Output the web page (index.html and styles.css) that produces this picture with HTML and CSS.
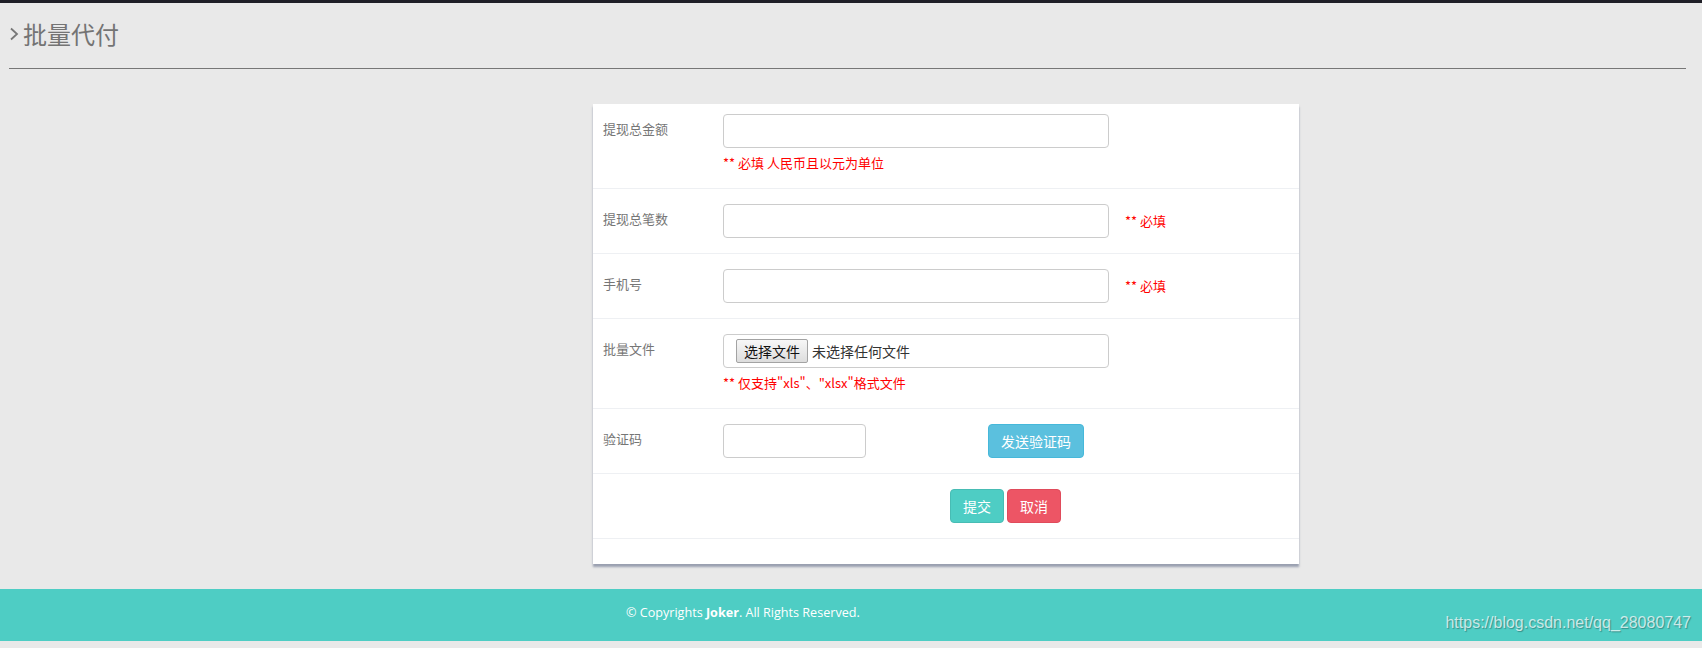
FILE: index.html
```html
<!DOCTYPE html>
<html lang="zh-CN">
  <head>
    <meta charset="UTF-8" />
    <title>批量代付</title>
    <link rel="stylesheet" href="styles.css">
  </head>
  <body>
    <div class="topbar"></div>

    <div class="page-head">
      <h3 class="page-title">
        <svg class="chevron" width="10" height="14" viewBox="0 0 10 14">
          <polyline points="2,1.5 8,7 2,12.5" fill="none" stroke="#777" stroke-width="1.8" />
        </svg>
        批量代付
      </h3>
    </div>

    <div class="panel">
      <form class="form">
        <div class="form-row first">
          <label class="form-label">提现总金额</label>
          <div class="form-field">
            <input class="form-control" type="text">
            <p class="help">** 必填 人民币且以元为单位</p>
          </div>
        </div>

        <div class="form-row">
          <label class="form-label">提现总笔数</label>
          <div class="form-field">
            <input class="form-control" type="text">
          </div>
          <span class="note">** 必填</span>
        </div>

        <div class="form-row">
          <label class="form-label">手机号</label>
          <div class="form-field">
            <input class="form-control" type="text">
          </div>
          <span class="note">** 必填</span>
        </div>

        <div class="form-row">
          <label class="form-label">批量文件</label>
          <div class="form-field">
            <div class="form-control file-box">
              <button type="button" class="file-btn">选择文件</button>
              <span class="file-name">未选择任何文件</span>
            </div>
            <p class="help">** 仅支持"xls"、"xlsx"格式文件</p>
          </div>
        </div>

        <div class="form-row">
          <label class="form-label">验证码</label>
          <div class="code-field">
            <input class="form-control" type="text">
          </div>
          <button type="button" class="btn btn-info send-code">发送验证码</button>
        </div>

        <div class="form-row actions">
          <button type="button" class="btn btn-theme">提交</button>
          <button type="button" class="btn btn-danger">取消</button>
        </div>
      </form>
    </div>

    <footer class="footer">
      <div class="copyright">© Copyrights <b>Joker</b>. All Rights Reserved.</div>
      <span class="watermark">https://blog.csdn.net/qq_28080747</span>
    </footer>
  </body>
</html>
```

FILE: styles.css
```css
* {
  margin: 0;
  padding: 0;
  box-sizing: border-box;
}

body {
  background-color: #e9e9e9;
  color: #333;
  font-family: "Noto Sans CJK SC", "Open Sans", sans-serif;
  position: relative;
  height: 648px;
  overflow: hidden;
}

.topbar {
  height: 3px;
  background-color: #1f1f27;
}

.page-head {
  margin: 0 16px 0 9px;
  padding: 14px 0 17px;
  border-bottom: 1px solid #777;
}

.page-title {
  display: flex;
  align-items: center;
  font-size: 24px;
  font-weight: normal;
  line-height: 34px;
  color: #747474;
}

.chevron {
  margin-right: 4px;
}

.panel {
  width: 706px;
  margin: 35px 0 0 593px;
  padding-bottom: 25px;
  background-color: #fff;
  box-shadow: 0 3px 2px rgba(90, 100, 130, 0.55);
}

.form-row {
  display: flex;
  align-items: flex-start;
  padding: 15px 0;
  border-bottom: 1px solid #eef0f3;
}

.form-row.first {
  padding-top: 10px;
}

.form-label {
  width: 130px;
  padding: 5px 0 0 10px;
  font-size: 13px;
  line-height: 20px;
  color: #767676;
}

.form-field {
  width: 386px;
}

.code-field {
  width: 143px;
}

.form-control {
  display: block;
  width: 100%;
  height: 34px;
  border: 1px solid #ccc;
  border-radius: 4px;
  background-color: #fff;
  font-family: inherit;
  font-size: 14px;
}

.help {
  margin-top: 5px;
  font-size: 13px;
  line-height: 20px;
  color: #f00;
}

.note {
  margin-left: 16px;
  font-size: 13px;
  line-height: 34px;
  color: #f00;
}

.file-box {
  display: flex;
  align-items: center;
  gap: 4px;
  padding: 0 12px;
}

.file-btn {
  height: 24px;
  padding: 0 7px;
  border: 1px solid #a3a3a3;
  border-radius: 2px;
  background: linear-gradient(#f7f7f7, #dddddd);
  font-family: inherit;
  font-size: 14px;
  line-height: 22px;
  color: #111;
}

.file-name {
  font-size: 14px;
  color: #333;
}

.btn {
  height: 34px;
  padding: 0 12px;
  border: 1px solid transparent;
  border-radius: 4px;
  font-family: inherit;
  font-size: 14px;
  color: #fff;
  cursor: pointer;
}

.btn-info {
  background-color: #5bc0de;
  border-color: #46b8da;
}

.btn-theme {
  background-color: #4ecdc4;
  border-color: #48bcb4;
}

.btn-danger {
  background-color: #ed5565;
  border-color: #e04b5b;
}

.send-code {
  margin-left: 122px;
}

.actions {
  gap: 3px;
  padding-left: 357px;
}

.footer {
  height: 52px;
  margin-top: 25px;
  padding: 14px 0 0 626px;
  background-color: #4ecdc4;
}

.copyright {
  font-family: "Open Sans", sans-serif;
  font-size: 12.6px;
  line-height: 20px;
  color: #fff;
}

.watermark {
  position: absolute;
  right: 11px;
  top: 614px;
  font-family: "Liberation Sans", Arial, sans-serif;
  font-size: 16px;
  color: rgba(255, 255, 255, 0.72);
  text-shadow: 1px 1px 1px rgba(0, 0, 0, 0.3);
}
```
